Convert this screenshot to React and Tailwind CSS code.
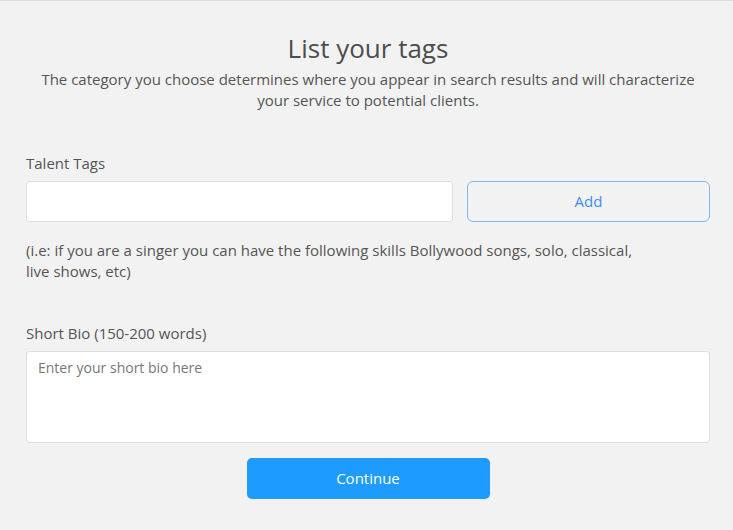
export default function App() {
  return (
    <div
      className="min-h-[530px] w-full bg-[#f2f2f2] border-t border-[#dcdfdf] text-[#555555]"
      style={{ fontFamily: '"Open Sans", "Liberation Sans", sans-serif' }}
    >
      <div className="w-[684px] ml-[26px] pt-[30px]">
        <h1 className="text-center text-[26px] leading-[34px] text-[#4d4d4d]">List your tags</h1>
        <p className="mt-[4px] text-center text-[15px] leading-[21px] text-[#555555]">
          The category you choose determines where you appear in search results and will characterize
          <br />
          your service to potential clients.
        </p>

        <label className="block mt-[42px] text-[15px] leading-[20px]">Talent Tags</label>
        <div className="mt-[8px] flex gap-[14px]">
          <input
            type="text"
            className="h-[41px] w-[427px] bg-white border border-[#dedede] rounded-[3px] outline-none px-3"
          />
          <button className="h-[41px] flex-1 border border-[#7db9f3] rounded-[6px] text-[#3a8ef5] text-[15px]">
            Add
          </button>
        </div>
        <p className="mt-[18px] w-[620px] text-[15px] leading-[21px]">
          (i.e: if you are a singer you can have the following skills Bollywood songs, solo, classical, live shows, etc)
        </p>

        <label className="block mt-[41px] text-[15px] leading-[20px]">Short Bio (150-200 words)</label>
        <textarea
          placeholder="Enter your short bio here"
          className="mt-[8px] block w-full h-[92px] bg-white border border-[#dedede] rounded-[3px] outline-none px-[11px] py-[6px] text-[14px] leading-[20px] placeholder:text-[#777777] resize-none"
        />
        <div className="flex justify-center mt-[15px]">
          <button className="w-[243px] h-[41px] bg-[#1e9bff] rounded-[5px] text-white text-[15px]">
            Continue
          </button>
        </div>
      </div>
    </div>
  );
}
